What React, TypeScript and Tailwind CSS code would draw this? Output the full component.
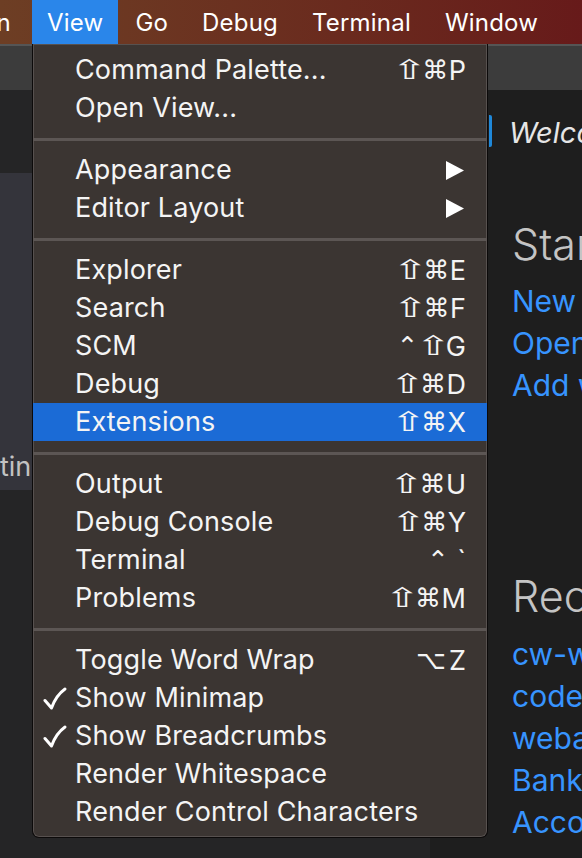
import React from "react";

type Item =
  | { kind: "item"; label: string; keys?: string; sub?: boolean; checked?: boolean; active?: boolean }
  | { kind: "sep" };

const items: Item[] = [
  { kind: "item", label: "Command Palette...", keys: "⇧⌘P" },
  { kind: "item", label: "Open View..." },
  { kind: "sep" },
  { kind: "item", label: "Appearance", sub: true },
  { kind: "item", label: "Editor Layout", sub: true },
  { kind: "sep" },
  { kind: "item", label: "Explorer", keys: "⇧⌘E" },
  { kind: "item", label: "Search", keys: "⇧⌘F" },
  { kind: "item", label: "SCM", keys: "⌃⇧G" },
  { kind: "item", label: "Debug", keys: "⇧⌘D" },
  { kind: "item", label: "Extensions", keys: "⇧⌘X", active: true },
  { kind: "sep" },
  { kind: "item", label: "Output", keys: "⇧⌘U" },
  { kind: "item", label: "Debug Console", keys: "⇧⌘Y" },
  { kind: "item", label: "Terminal", keys: "⌃ `" },
  { kind: "item", label: "Problems", keys: "⇧⌘M" },
  { kind: "sep" },
  { kind: "item", label: "Toggle Word Wrap", keys: "⌥ Z" },
  { kind: "item", label: "Show Minimap", checked: true },
  { kind: "item", label: "Show Breadcrumbs", checked: true },
  { kind: "item", label: "Render Whitespace" },
  { kind: "item", label: "Render Control Characters" },
];

const menus = ["View", "Go", "Debug", "Terminal", "Window"];
const recent = ["cw-webapp", "code-samples", "webapp", "Banking", "Accounts"];

function Check() {
  return (
    <svg width="24" height="24" viewBox="0 0 24 24" className="mt-[2px]">
      <path d="M2 13.5 L8.5 21 C11 14 15 7 22 2" fill="none" stroke="white" strokeWidth="3" strokeLinecap="round" strokeLinejoin="round" />
    </svg>
  );
}

function Arrow() {
  return (
    <svg width="18" height="19" viewBox="0 0 18 19" className="mr-[2px]">
      <polygon points="0,0 18,9.5 0,19" fill="white" />
    </svg>
  );
}

// shortcut: symbols drawn from DejaVu, letters from Inter
function Keys({ keys }: { keys: string }) {
  return (
    <span className="flex items-center text-[#f4f4f4] whitespace-nowrap">
      {keys.split("").map((ch, i) => {
        if (ch === "⇧")
          return (
            <span key={i} className="inline-block w-[25px] text-center text-[27px] font-['DejaVu_Sans',sans-serif] scale-x-[1.55]">
              {ch}
            </span>
          );
        if (ch === "⌘" || ch === "⌥" || ch === "⌃")
          return (
            <span key={i} className="inline-block w-[27px] text-center text-[26px] font-['DejaVu_Sans',sans-serif]">
              {ch}
            </span>
          );
        if (ch === " ") return <span key={i} className="w-[6px]" />;
        return (
          <span key={i} className="text-[27px] leading-none">
            {ch}
          </span>
        );
      })}
    </span>
  );
}

function MenuRow({ item }: { item: Item }) {
  if (item.kind === "sep") {
    return (
      <div className="h-[24px] flex items-center">
        <div className="h-[3px] w-full bg-[#5c5654]" />
      </div>
    );
  }
  return (
    <div className={`h-[38px] flex items-center pl-[10px] pr-[21px] ${item.active ? "bg-[#1b6bd6]" : ""}`}>
      <div className="w-[32px] flex items-center">{item.checked && <Check />}</div>
      <span className="flex-1 text-[27px] tracking-[0.15px] text-[#f4f4f4] whitespace-nowrap">{item.label}</span>
      {item.keys && <Keys keys={item.keys} />}
      {item.sub && <Arrow />}
    </div>
  );
}

export default function App() {
  return (
    <div className="relative w-[582px] h-[858px] overflow-hidden bg-[#1e1e1e] font-['Inter','Noto_Sans',sans-serif]">
      {/* menu bar */}
      <div className="h-[44px] flex items-stretch bg-gradient-to-r from-[#6d3e24] to-[#671a1a] text-white text-[24px] tracking-[0.2px]">
        <div className="w-[32px] flex items-center justify-end pr-[21px] pt-[1px]">n</div>
        {menus.map((m) => (
          <div key={m} className={`flex items-center pt-[1px] whitespace-nowrap ${m === "View" ? "bg-[#2a86ea] px-[15px]" : "px-[17px]"}`}>
            {m}
          </div>
        ))}
      </div>

      {/* tab strip */}
      <div className="h-[46px] bg-[#3c3c3c] border-t-2 border-[#555]" />

      <div className="flex h-[768px]">
        {/* sidebar */}
        <div className="w-[430px] shrink-0 bg-[#252526] flex flex-col">
          <div className="h-[83px]" />
          <div className="h-[317px] bg-[#34343b] flex items-end">
            <span className="text-[27px] text-[#c2c2c2] whitespace-nowrap leading-[40px] mb-[3px]">ting</span>
          </div>
        </div>

        {/* editor */}
        <div className="flex-1 min-w-0 overflow-hidden flex flex-col pl-[59px] text-[30px]">
          <div className="mt-[25px] h-[36px] flex items-start">
            <div className="w-[3px] h-[32px] shrink-0 bg-[#1f88d9] rounded-r-[2px]" />
            <span className="ml-[17px] italic text-[29px] leading-[36px] text-[#e6e6e6] whitespace-nowrap">Welcome</span>
          </div>
          <div className="mt-[68px] h-[50px] pl-[23px] text-[43px] leading-[50px] font-light text-[#c4c4c4] whitespace-nowrap">Start</div>
          <div className="mt-[11px] pl-[23px] flex flex-col text-[#3794ff] leading-[42px] whitespace-nowrap">
            <span>New file</span>
            <span>Open folder...</span>
            <span>Add workspace folder...</span>
          </div>
          <div className="mt-[165px] h-[50px] pl-[23px] text-[43px] leading-[50px] font-light text-[#c4c4c4] whitespace-nowrap">Recent</div>
          <div className="mt-[12px] pl-[23px] flex flex-col text-[#3794ff] leading-[42px] whitespace-nowrap">
            {recent.map((r) => (
              <span key={r}>{r}</span>
            ))}
          </div>
        </div>
      </div>

      {/* view menu */}
      <div className="absolute left-[32px] top-[44px] w-[456px] h-[794px] pt-[7px] bg-[#3b3532] border-x border-b border-[#0c0a0a] rounded-b-[7px] shadow-[inset_0_0_0_1px_#57514f]">
        {items.map((it, i) => (
          <MenuRow key={i} item={it} />
        ))}
      </div>
    </div>
  );
}
